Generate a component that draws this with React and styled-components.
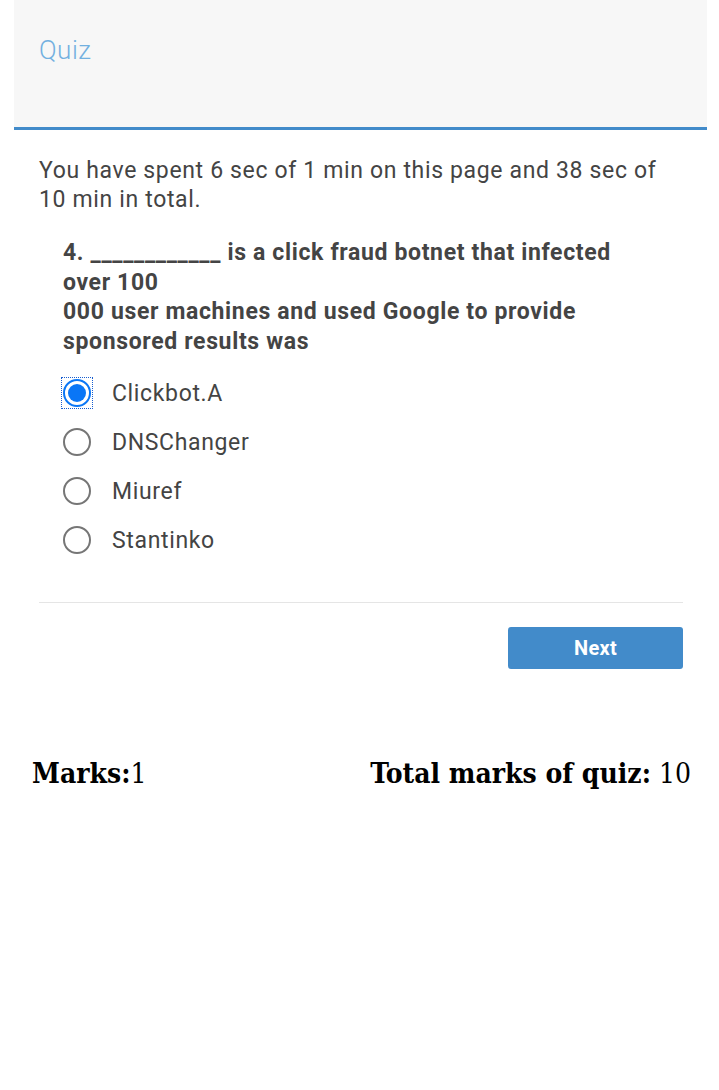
import React, { useState } from 'react'
import styled, { createGlobalStyle } from 'styled-components'

const GlobalStyle = createGlobalStyle`
  body {
    margin: 0;
    background: #fff;
    font-family: Roboto, 'Noto Sans', sans-serif;
  }
`

const Page = styled.div`
  padding: 0 12px 0 14px;
`

const Header = styled.div`
  background: #f7f7f7;
  border-bottom: 3px solid #428bca;
  height: 130px;
  padding: 0 25px;
  box-sizing: border-box;
`

const Title = styled.h1`
  margin: 0;
  padding-top: 35px;
  font-size: 26px;
  font-weight: 300;
  letter-spacing: 0.5px;
  color: #72b0e0;
`

const Body = styled.div`
  padding: 26px 24px 0 25px;
  color: #444;
  letter-spacing: 0.65px;
`

const TimeInfo = styled.p`
  margin: 0;
  font-size: 23px;
  line-height: 29px;
`

const Question = styled.div`
  padding: 24px 60px 0 24px;
`

const QuestionText = styled.p`
  margin: 0;
  font-size: 23px;
  font-weight: 700;
  line-height: 29.5px;
`

const Options = styled.div`
  display: flex;
  flex-direction: column;
  gap: 21px;
  padding-top: 23px;
`

const Option = styled.label`
  display: flex;
  align-items: center;
  gap: 20px;
  font-size: 23px;
  height: 28px;
  cursor: pointer;
`

const RadioBox = styled.span`
  width: 30px;
  height: 30px;
  margin-left: -1px;
  box-sizing: border-box;
  display: flex;
  align-items: center;
  justify-content: center;
  outline: ${p => (p.$checked ? '1px dotted #1a5fd0' : 'none')};
`

const Circle = styled.span`
  width: 28px;
  height: 28px;
  box-sizing: border-box;
  border-radius: 50%;
  border: 2px solid ${p => (p.$checked ? '#0a76f6' : '#767676')};
  display: flex;
  align-items: center;
  justify-content: center;
  &::after {
    content: '';
    width: 18px;
    height: 18px;
    border-radius: 50%;
    background: ${p => (p.$checked ? '#0a76f6' : 'transparent')};
  }
`

const Divider = styled.hr`
  border: 0;
  border-top: 1px solid #e5e5e5;
  margin: 48px 0 0;
`

const Actions = styled.div`
  display: flex;
  justify-content: flex-end;
  padding-top: 24px;
`

const NextButton = styled.button`
  width: 175px;
  height: 42px;
  border: 0;
  border-radius: 3px;
  background: #428bca;
  color: #fff;
  font-family: Roboto, sans-serif;
  font-size: 20px;
  font-weight: 700;
  letter-spacing: 0.3px;
`

const Footer = styled.div`
  display: flex;
  justify-content: space-between;
  padding: 88px 16px 0 18px;
  font-family: 'DejaVu Serif', serif;
  font-stretch: condensed;
  font-size: 28px;
  color: #000;
  b { font-weight: 700; }
`

const options = ['Clickbot.A', 'DNSChanger', 'Miuref', 'Stantinko']

export default function App() {
  const [picked, setPicked] = useState(0)
  return (
    <>
      <GlobalStyle />
      <Page>
        <Header>
          <Title>Quiz</Title>
        </Header>
        <Body>
          <TimeInfo>You have spent 6 sec of 1 min on this page and 38 sec of 10 min in total.</TimeInfo>
          <Question>
            <QuestionText>
              4. ____________ is a click fraud botnet that infected over 100
              <br />
              000 user machines and used Google to provide sponsored results was
            </QuestionText>
            <Options>
              {options.map((o, i) => (
                <Option key={o} onClick={() => setPicked(i)}>
                  <RadioBox $checked={picked === i}>
                    <Circle $checked={picked === i} />
                  </RadioBox>
                  {o}
                </Option>
              ))}
            </Options>
          </Question>
          <Divider />
          <Actions>
            <NextButton>Next</NextButton>
          </Actions>
        </Body>
        <Footer>
          <span><b>Marks:</b>1</span>
          <span><b>Total marks of quiz:</b> 10</span>
        </Footer>
      </Page>
    </>
  )
}
